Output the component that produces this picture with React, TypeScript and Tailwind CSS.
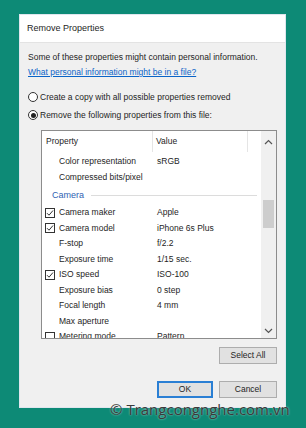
import React from "react";

type Row = { name: string; value?: string; check?: boolean; checked?: boolean };

const before: Row[] = [
  { name: "Color representation", value: "sRGB" },
  { name: "Compressed bits/pixel" },
];

const camera: Row[] = [
  { name: "Camera maker", value: "Apple", check: true, checked: true },
  { name: "Camera model", value: "iPhone 6s Plus", check: true, checked: true },
  { name: "F-stop", value: "f/2.2" },
  { name: "Exposure time", value: "1/15 sec." },
  { name: "ISO speed", value: "ISO-100", check: true, checked: true },
  { name: "Exposure bias", value: "0 step" },
  { name: "Focal length", value: "4 mm" },
  { name: "Max aperture" },
  { name: "Metering mode", value: "Pattern", check: true, checked: false },
];

function CheckBox({ checked }: { checked?: boolean }) {
  return (
    <div className="w-[10px] h-[10px] border border-[#333] bg-white flex items-center justify-center">
      {checked && (
        <svg width="8" height="8" viewBox="0 0 8 8">
          <path d="M1 4.2 L3 6.2 L7 1.5" fill="none" stroke="#333" strokeWidth="1" />
        </svg>
      )}
    </div>
  );
}

function PropRow({ row }: { row: Row }) {
  return (
    <div className="h-[15.5px] flex items-center shrink-0">
      <div className="w-[17px] pl-[3px] shrink-0">{row.check && <CheckBox checked={row.checked} />}</div>
      <div className="w-[98px] shrink-0 whitespace-nowrap">{row.name}</div>
      <div className="whitespace-nowrap">{row.value}</div>
    </div>
  );
}

function Radio({ checked, label }: { checked?: boolean; label: string }) {
  return (
    <div className="h-[18px] flex items-center">
      <div className="w-[10px] h-[10px] rounded-full border border-[#333] bg-white flex items-center justify-center mr-[2px]">
        {checked && <div className="w-[5px] h-[5px] rounded-full bg-[#222]" />}
      </div>
      <span className="whitespace-nowrap">{label}</span>
    </div>
  );
}

export default function App() {
  return (
    <div
      className="relative w-[306px] h-[428px] bg-[#0d8a76] pt-[14px] pl-[19px] overflow-hidden text-[#1e1e1e]"
      style={{ fontFamily: '"Liberation Sans", Arial, sans-serif' }}
    >
      <div className="w-[267px] h-[394px] flex flex-col bg-[#f0f0f0] border border-[#dfe6ee]">
        <div className="h-[28px] bg-white flex items-center pl-[7px] text-[9px] border-b border-[#e3e3e3] shrink-0">
          Remove Properties
        </div>

        <div className="flex flex-col pl-[8px] pr-[8px] pt-[7px] text-[8.5px]">
          <div className="h-[15px] leading-[15px] whitespace-nowrap">
            Some of these properties might contain personal information.
          </div>
          <div className="h-[15px] leading-[15px] whitespace-nowrap text-[#0a64c8] underline">
            What personal information might be in a file?
          </div>

          <div className="mt-[8px]">
            <Radio label="Create a copy with all possible properties removed" />
            <Radio checked label="Remove the following properties from this file:" />
          </div>

          <div className="mt-[6px] ml-[13px] w-[236px] h-[209px] border border-[#8c8c8c] bg-white flex overflow-hidden">
            <div className="flex-1 flex flex-col overflow-hidden">
              <div className="h-[23px] flex items-start shrink-0">
                <div className="w-[111px] h-[21px] flex items-center pl-[4px] border-r border-[#e5e5e5]">
                  Property
                </div>
                <div className="w-[95px] h-[21px] flex items-center pl-[3px] border-r border-[#e5e5e5]">
                  Value
                </div>
              </div>
              {before.map((r) => (
                <PropRow key={r.name} row={r} />
              ))}
              <div className="h-[20px] flex items-center shrink-0 pl-[10px] pt-[1px]">
                <span className="text-[#2f5fb3] text-[9px]">Camera</span>
                <div className="ml-[7px] w-[166px] h-px bg-[#dcdcdc]" />
              </div>
              {camera.map((r) => (
                <PropRow key={r.name} row={r} />
              ))}
            </div>

            <div className="w-[15px] shrink-0 bg-[#f0f0f0] flex flex-col items-center">
              <svg width="9" height="6" viewBox="0 0 9 6" className="mt-[8px]">
                <path d="M1 5 L4.5 1.5 L8 5" fill="none" stroke="#555" strokeWidth="1.2" />
              </svg>
              <div className="mt-[55px] w-[11px] h-[28px] bg-[#cdcdcd]" />
              <svg width="9" height="6" viewBox="0 0 9 6" className="mt-[100px]">
                <path d="M1 1 L4.5 4.5 L8 1" fill="none" stroke="#555" strokeWidth="1.2" />
              </svg>
            </div>
          </div>

          <div className="mt-[8px] flex justify-end">
            <div className="w-[58px] h-[17px] bg-[#e1e1e1] border border-[#adadad] flex items-center justify-center">
              Select All
            </div>
          </div>

          <div className="mt-[17px] flex justify-end gap-[6px]">
            <div className="w-[56px] h-[17px] bg-[#e1e1e1] border-2 border-[#2a7fd4] flex items-center justify-center">
              OK
            </div>
            <div className="w-[58px] h-[17px] bg-[#e1e1e1] border border-[#adadad] flex items-center justify-center">
              Cancel
            </div>
          </div>
        </div>
      </div>

      <div
        className="absolute left-[110px] top-[400px] text-[15px] leading-[18px] text-[#3a3a3a] whitespace-nowrap [text-shadow:0_0_2px_rgba(255,255,255,0.7)]"
        style={{ fontFamily: '"Open Sans", "Liberation Sans", sans-serif' }}
      >
        © Trangcongnghe.com.vn
      </div>
    </div>
  );
}
